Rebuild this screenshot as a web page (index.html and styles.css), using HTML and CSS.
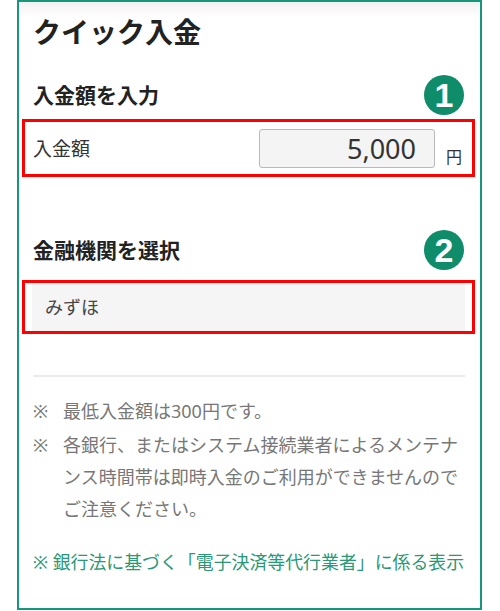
FILE: index.html
```html
<!DOCTYPE html>
<html lang="ja">
<head>
  <meta charset="UTF-8">
  <title>クイック入金</title>
  <link rel="stylesheet" href="styles.css">
</head>
<body>
  <div class="panel">
    <h1 class="title">クイック入金</h1>

    <div class="step-head">
      <h2>入金額を入力</h2>
      <span class="badge">1</span>
    </div>
    <div class="mark">
      <div class="amount-row">
        <label for="amount">入金額</label>
        <div class="amount-input">
          <input type="text" id="amount" value="5,000">
          <span class="unit">円</span>
        </div>
      </div>
    </div>

    <div class="step-head step-two">
      <h2>金融機関を選択</h2>
      <span class="badge">2</span>
    </div>
    <div class="mark mark-bank">
      <div class="bank">みずほ</div>
    </div>

    <hr class="divider">

    <ul class="notes">
      <li><span class="kome">※</span><span>最低入金額は300円です。</span></li>
      <li><span class="kome">※</span><span>各銀行、またはシステム接続業者によるメンテナンス時間帯は即時入金のご利用ができませんのでご注意ください。</span></li>
    </ul>

    <a class="legal" href="#">※ 銀行法に基づく「電子決済等代行業者」に係る表示</a>
  </div>
</body>
</html>
```

FILE: styles.css
```css
body {
  margin: 0;
  background: #fff;
  font-family: "Noto Sans", "Noto Sans CJK JP", sans-serif;
  color: #333;
}
.panel {
  box-sizing: border-box;
  width: 465px;
  height: 610px;
  margin-left: 17px;
  padding: 0 15px 0 14px;
  border: 2px solid #17977a;
  background: linear-gradient(#f2f2f2, #fff 16px);
}
.title {
  margin: 10px 0 0;
  font-size: 28px;
  line-height: 40px;
  font-weight: bold;
  color: #222;
}
.step-head {
  display: flex;
  align-items: center;
  justify-content: space-between;
  margin-top: 23px;
  padding-right: 1px;
}
.step-head h2 {
  margin: 0;
  font-size: 21px;
  line-height: 30px;
  font-weight: bold;
  color: #222;
}
.step-two {
  margin-top: 53px;
}
.badge {
  width: 40px;
  height: 40px;
  border-radius: 50%;
  background: #0f8c6a;
  color: #fff;
  font-family: "Liberation Sans", Arial, sans-serif;
  font-weight: bold;
  font-size: 34px;
  line-height: 40px;
  text-align: center;
}
.mark {
  margin: 4px -10px 0 -11px;
  border: 3px solid #f00;
}
.amount-row {
  display: flex;
  align-items: center;
  justify-content: space-between;
  height: 52px;
  padding: 0 10px 0 8px;
}
.amount-row label {
  font-size: 19px;
  color: #333;
}
.amount-input {
  display: flex;
  align-items: flex-end;
}
.amount-input input {
  box-sizing: border-box;
  width: 176px;
  height: 39px;
  padding: 0 18px 0 0;
  border: 1px solid #b9b9b9;
  border-radius: 3px;
  background: #f4f4f4;
  font-family: "Noto Sans", sans-serif;
  font-size: 27px;
  color: #333;
  text-align: right;
}
.unit {
  margin: 0 0 1px 11px;
  font-size: 16px;
  line-height: 20px;
  color: #333;
}
.mark-bank {
  margin-top: 10px;
  padding: 0 7px;
}
.bank {
  height: 48px;
  padding-left: 13px;
  background: #f5f5f5;
  font-size: 18px;
  line-height: 48px;
  color: #444;
}
.divider {
  margin: 41px 0 0;
  border: 0;
  border-top: 2px solid #ebebeb;
}
.notes {
  margin: 18px 0 0;
  padding: 0;
  list-style: none;
  font-size: 18px;
  line-height: 32px;
  color: #777;
}
.notes li {
  display: flex;
  margin-bottom: 2px;
}
.kome {
  flex: none;
  width: 30px;
}
.legal {
  display: block;
  margin-top: 22px;
  font-size: 17.9px;
  line-height: 30px;
  color: #2a9874;
  text-decoration: none;
}
```
